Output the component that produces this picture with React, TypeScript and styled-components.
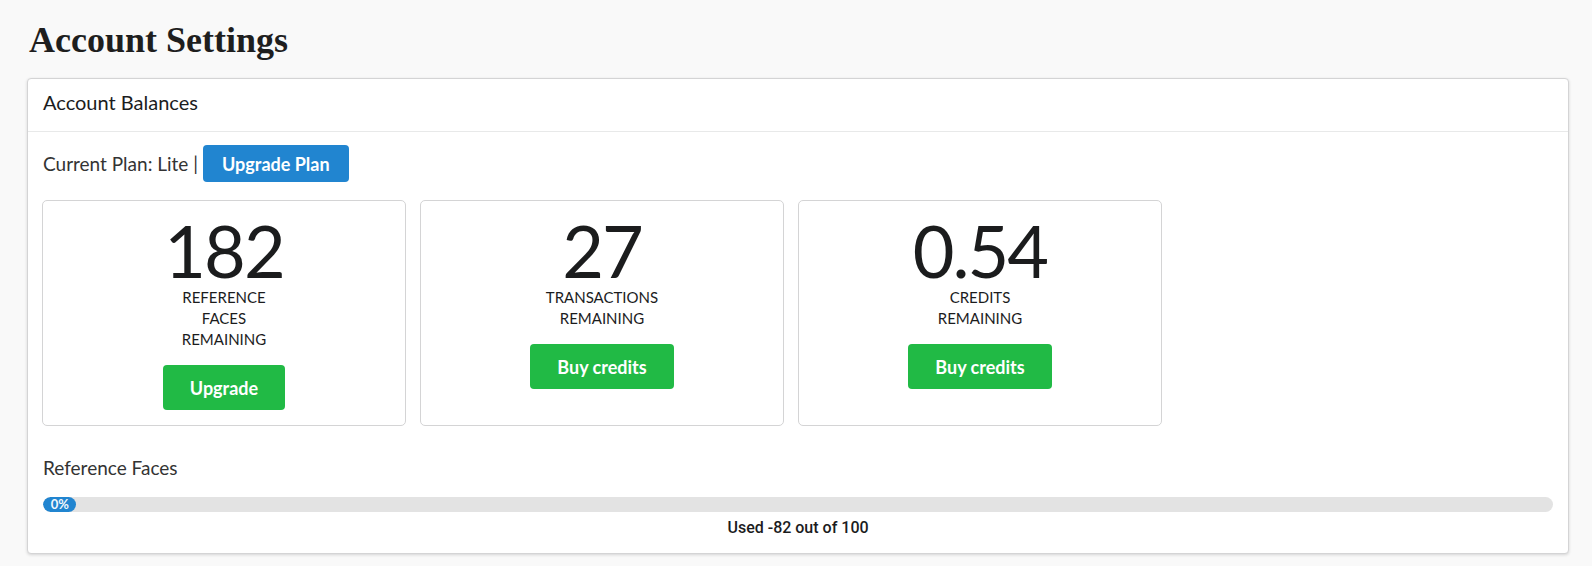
import * as React from "react";
import styled, { createGlobalStyle } from "styled-components";

const GlobalStyle = createGlobalStyle`
  body {
    margin: 0;
    background: #f9f9f9;
    font-family: Lato, "Open Sans", sans-serif;
    color: rgba(0, 0, 0, 0.87);
  }
`;

const Page = styled.div`
  padding: 19px 23px 12px 27px;
`;

const Title = styled.h1`
  margin: 0 0 16px 2px;
  font-family: "Liberation Serif", serif;
  font-weight: 700;
  font-size: 36px;
  line-height: 1.2;
  color: #1e1e1e;
`;

const Card = styled.section`
  background: #fff;
  border: 1px solid #d4d4d5;
  border-radius: 4px;
  box-shadow: 0 1px 3px 0 #d4d4d5;
`;

const CardHeader = styled.div`
  padding: 10px 15px 15px;
  font-size: 20px;
  line-height: 27px;
  color: #1b1c1d;
  border-bottom: 1px solid rgba(34, 36, 38, 0.1);
`;

const CardBody = styled.div`
  padding: 13px 15px 15px;
`;

const PlanRow = styled.div`
  display: flex;
  align-items: center;
  gap: 5px;
  font-size: 19px;
  color: #333;
`;

const Button = styled.button<{ $color: "blue" | "green"; $size?: "md" | "lg" }>`
  border: none;
  border-radius: 4px;
  cursor: pointer;
  font-family: Lato, sans-serif;
  font-weight: 700;
  color: #fff;
  background: ${(p) => (p.$color === "blue" ? "#2185d0" : "#21ba45")};
  height: ${(p) => (p.$size === "lg" ? "45px" : "37px")};
  padding: ${(p) => (p.$size === "lg" ? "0 27px" : "0 19px")};
  font-size: 18px;
`;

const Stats = styled.div`
  display: flex;
  gap: 14px;
  margin: 18px 0 0 -1px;
`;

const StatBox = styled.div`
  width: 364px;
  box-sizing: border-box;
  border: 1px solid #d4d4d5;
  border-radius: 5px;
  padding: 13px 16px 15px;
  display: flex;
  flex-direction: column;
  align-items: center;
`;

const Value = styled.div`
  font-size: 72px;
  line-height: 1;
  letter-spacing: -2px;
  color: #1b1c1d;
`;

const Label = styled.div`
  width: min-content;
  margin-top: 1px;
  text-align: center;
  text-transform: uppercase;
  font-size: 15px;
  line-height: 21px;
  color: #1b1c1d;
`;

const StatAction = styled(Button)`
  margin-top: 15px;
`;

const SectionTitle = styled.div`
  margin-top: 28px;
  font-size: 19px;
  line-height: 27px;
  color: #333;
`;

const Track = styled.div`
  margin-top: 16px;
  height: 15px;
  border-radius: 8px;
  background: #e3e3e3;
  overflow: hidden;
`;

const Fill = styled.div`
  height: 100%;
  min-width: 33px;
  box-sizing: border-box;
  border-radius: 8px;
  background: #2185d0;
  color: #f2f7fc;
  font-size: 13px;
  font-weight: 700;
  line-height: 15px;
  padding-right: 7px;
  text-align: right;
`;

const UsedLabel = styled.div`
  margin-top: 6px;
  text-align: center;
  font-family: Roboto, sans-serif;
  font-size: 16px;
  font-weight: 500;
  line-height: 20px;
  color: #1b1c1d;
`;

const stats = [
  { value: "182", label: "Reference Faces Remaining", action: "Upgrade" },
  { value: "27", label: "Transactions Remaining", action: "Buy credits" },
  { value: "0.54", label: "Credits Remaining", action: "Buy credits" },
];

export default function App() {
  const used = -82;
  const total = 100;
  const pct = Math.max(0, Math.round((used / total) * 100));
  return (
    <>
      <GlobalStyle />
      <Page>
        <Title>Account Settings</Title>
        <Card>
          <CardHeader>Account Balances</CardHeader>
          <CardBody>
            <PlanRow>
              <span>Current Plan: Lite |</span>
              <Button $color="blue">Upgrade Plan</Button>
            </PlanRow>
            <Stats>
              {stats.map((s) => (
                <StatBox key={s.label}>
                  <Value>{s.value}</Value>
                  <Label>{s.label}</Label>
                  <StatAction $color="green" $size="lg">
                    {s.action}
                  </StatAction>
                </StatBox>
              ))}
            </Stats>
            <SectionTitle>Reference Faces</SectionTitle>
            <Track>
              <Fill style={{ width: `${pct}%` }}>{pct}%</Fill>
            </Track>
            <UsedLabel>
              Used {used} out of {total}
            </UsedLabel>
          </CardBody>
        </Card>
      </Page>
    </>
  );
}
